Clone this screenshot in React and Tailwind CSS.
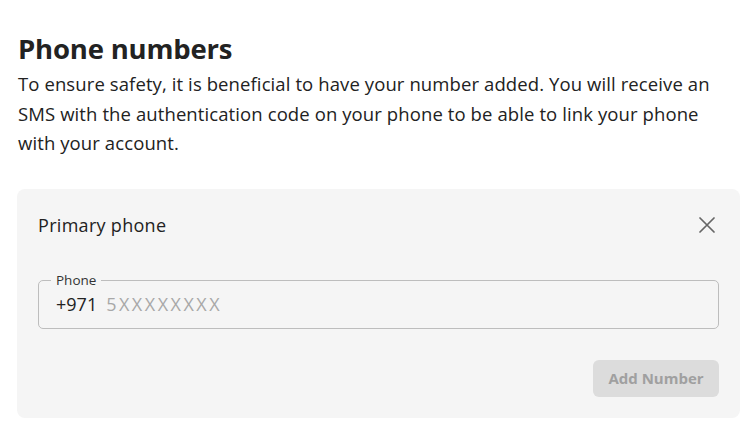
export default function App() {
  return (
    <div className="min-h-screen bg-white px-[18px] pt-[31px] text-[#222] font-['Open_Sans',sans-serif]">
      <h1 className="text-[27.5px] font-bold leading-[36px] tracking-[-0.2px] text-[#222]">Phone numbers</h1>
      <p className="mt-[2px] w-[720px] text-[18.5px] leading-[29.5px] tracking-[0.1px] text-[#222]">
        To ensure safety, it is beneficial to have your number added. You will receive an SMS with the authentication code on your phone to be able to link your phone with your account.
      </p>

      <div className="mt-[31px] ml-[-1px] w-[723px] rounded-lg bg-[#f5f5f5] px-[21px] pt-[24px] pb-[21px]">
        <div className="flex items-center justify-between">
          <span className="text-[18px] leading-[24px] tracking-[0.3px] text-[#222]">Primary phone</span>
          <button className="mr-[4px] text-[#666]">
            <svg width="16" height="16" viewBox="0 0 16 16" fill="none" stroke="currentColor" strokeWidth="1.7" strokeLinecap="round">
              <path d="M1 1 L15 15 M15 1 L1 15" />
            </svg>
          </button>
        </div>

        <div className="relative mt-[43px] flex h-[49px] items-center gap-[9px] rounded-[5px] border border-[#bdbdbd] px-[17px] pt-[1px] text-[18px]">
          <span className="absolute left-[12px] top-[-9px] bg-[#f5f5f5] px-[5px] text-[13.5px] leading-[16px] text-[#333]">Phone</span>
          <span className="text-[#222]">+971</span>
          <span className="tracking-[2.5px] text-[#a8a8a8]">5XXXXXXXX</span>
        </div>

        <div className="mt-[31px] flex justify-end">
          <button className="h-[37px] w-[126px] rounded-[6px] bg-[#dcdcdc] text-[15px] font-bold text-[#a0a0a0]">
            Add Number
          </button>
        </div>
      </div>
    </div>
  );
}
